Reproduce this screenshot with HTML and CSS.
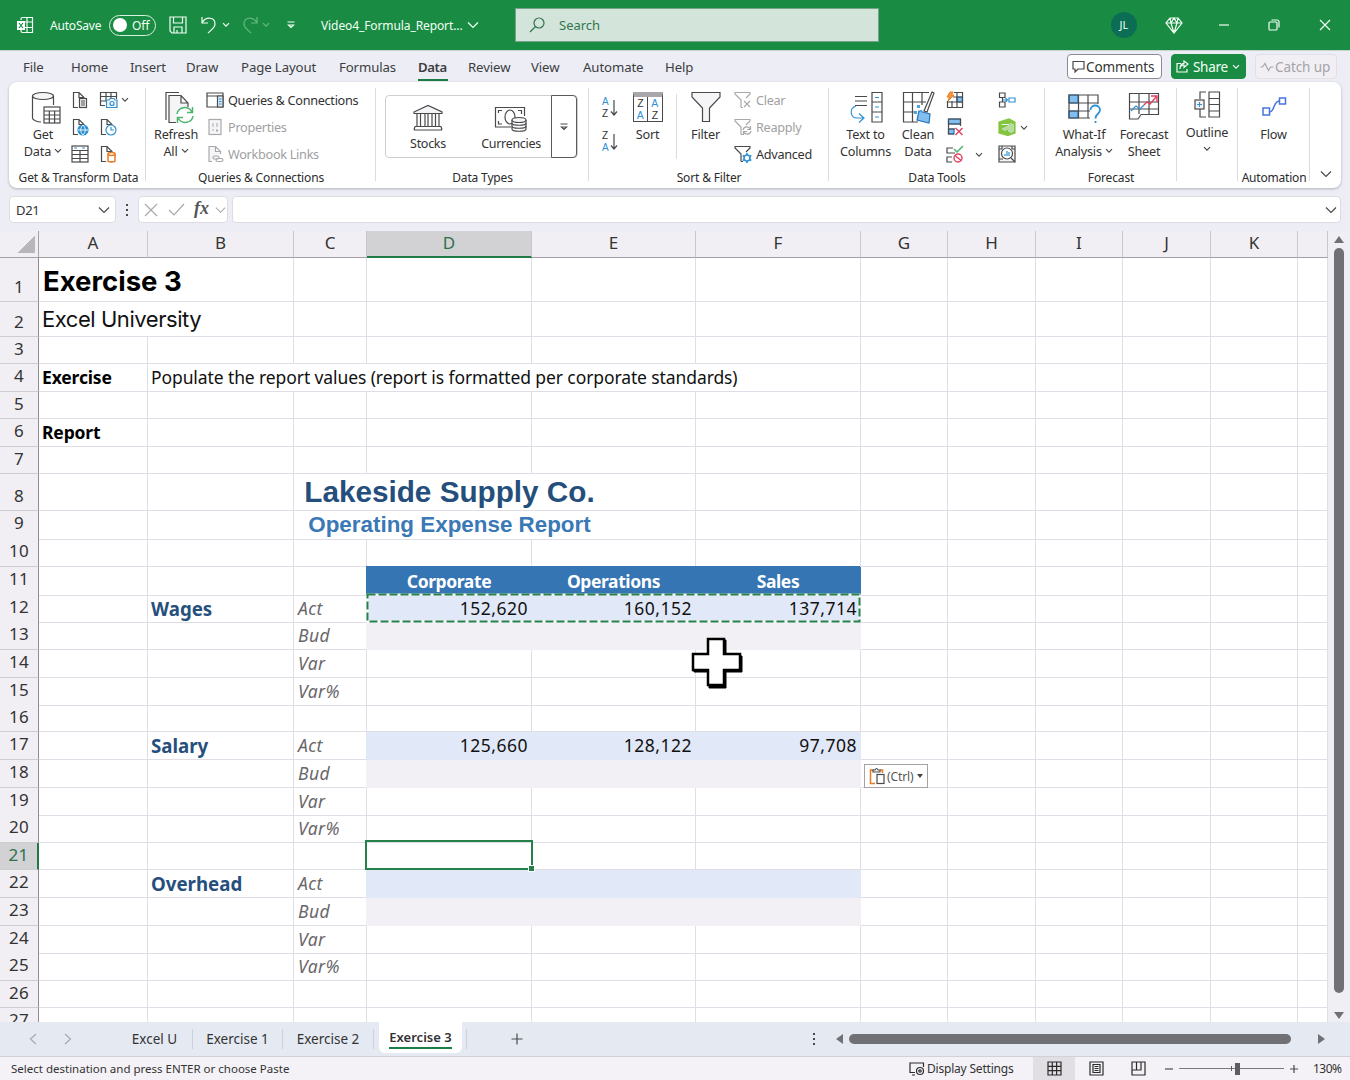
FILE: index.html
```html
<!DOCTYPE html>
<html lang="en">
<head>
    <meta charset="UTF-8">
    <meta name="viewport" content="width=device-width, initial-scale=1.0">
    <title>Video4_Formula_Report - Excel</title>
    <link rel="stylesheet" href="styles.css">
</head>
<body>

    <!-- Shared symbols -->
    <svg class="defs">
        <symbol id="chev" viewBox="0 0 8 6"><path d="M1 1.2 L4 4.2 L7 1.2"/></symbol>
        <symbol id="page" viewBox="0 0 18 18"><path d="M7 16.5H2.5V1.5H8L13 6.5V8M8 1.5V6.5H13"/></symbol>
        <symbol id="funnel" viewBox="0 0 18 18"><path d="M7 16.5V9L1 3V1.5H16V3L12 7M7 16.5H9"/></symbol>
    </svg>

    <div class="titlebar">
        <svg class="i white app-icon" width="18" height="18" viewBox="0 0 18 18"><path d="M5 4V3Q5 1.5 6.5 1.5H16.5V16.5H6.5Q5 16.5 5 15V14M11 1.5V16.5M9 6H16.5M9 11.5H16.5"/><rect class="solid" x="1" y="5" width="8" height="9"/><path class="on-white" d="M3 7L7 12M7 7L3 12"/></svg>
        <span class="autosave">AutoSave</span>
        <span class="toggle"><i></i><b>Off</b></span>
        <svg class="i white save" width="18" height="18" viewBox="0 0 18 18"><path d="M1 1H17V17H3L1 15ZM4.500 1V7H13.500V1M5 17V11H13V17M8 17V14"/></svg>
        <svg class="i white undo" width="18" height="20" viewBox="0 0 18 20"><path d="M2 2V8H8M2 8C6 1 15 2 15 9C15 13 11 15 8 18"/></svg>
        <svg class="i white undo-more" width="8" height="6"><use href="#chev"/></svg>
        <svg class="i faded redo" width="18" height="20" viewBox="0 0 18 20"><path d="M16 2V8H10M16 8C12 1 3 2 3 9C3 13 7 15 10 18"/></svg>
        <svg class="i faded" width="8" height="6"><use href="#chev"/></svg>
        <svg class="i white customize" width="8" height="8" viewBox="0 0 8 8"><path d="M0.500 1H7.500M1.500 4L4 6.500L6.500 4Z"/></svg>
        <span class="doc-name">Video4_Formula_Report...</span>
        <svg class="i white doc-chev" width="12" height="8" viewBox="0 0 12 8"><path d="M1 1.500L6 6.500L11 1.500"/></svg>
        <div class="search">
            <svg class="i search-icon" width="16" height="16" viewBox="0 0 16 16"><circle cx="10" cy="6" r="5"/><path d="M6.500 9.500L1 15"/></svg>
            <span>Search</span>
        </div>
        <span class="avatar">JL</span>
        <svg class="i white gem" width="18" height="17" viewBox="0 0 18 17"><path d="M5 1H13L17 6L9 16L1 6ZM1 6H17M5 1L6 6L9 16L12 6L13 1M6 6L9 1L12 6"/></svg>
        <svg class="i white win-min" width="12" height="12" viewBox="0 0 12 12"><path d="M1 6H11"/></svg>
        <svg class="i white win-max" width="12" height="12" viewBox="0 0 12 12"><rect x="1" y="3" width="8" height="8" rx="1"/><path d="M3.500 1H9Q11 1 11 3V8.500"/></svg>
        <svg class="i white win-close" width="12" height="12" viewBox="0 0 12 12"><path d="M1 1L11 11M11 1L1 11"/></svg>
    </div>

    <div class="menu">
        <span class="m-file">File</span>
        <span class="m-home">Home</span>
        <span class="m-insert">Insert</span>
        <span class="m-draw">Draw</span>
        <span class="m-layout">Page Layout</span>
        <span class="m-formulas">Formulas</span>
        <span class="m-data active">Data</span>
        <span class="m-review">Review</span>
        <span class="m-view">View</span>
        <span class="m-automate">Automate</span>
        <span class="m-help">Help</span>
        <div class="actions">
            <button class="comments"><svg class="i" width="13" height="13" viewBox="0 0 13 13"><path d="M1 1.500H12V9H6L3 12V9H1Z"/></svg>Comments</button>
            <button class="share"><svg class="i white" width="13" height="13" viewBox="0 0 13 13"><path d="M5 3.500H1V12H11V9M4 9C4 6 6 5 8 5V7.500L12 4L8 1V3.300C5 3.500 4 6 4 9Z"/></svg>Share<svg class="i white" width="8" height="6"><use href="#chev"/></svg></button>
            <button class="catchup"><svg class="i gray" width="14" height="12" viewBox="0 0 14 12"><path d="M0.500 6H2.500L5 2.500L8.500 9.500L10.500 6H13.500"/></svg>Catch up</button>
        </div>
    </div>

    <div class="ribbon">
        <div class="group g-get">
            <div class="body">
                <div class="big">
                    <svg class="i" width="32" height="34" viewBox="0 0 32 34"><ellipse class="pale" cx="14" cy="5" rx="10.500" ry="3.500"/><path d="M3.500 5V27C3.500 29 8 31 12 31M24.500 5V14"/><rect class="white-fill" x="15" y="16" width="16" height="16"/><path d="M15 20H31M15 24H31M15 28H31M20.300 20V32M25.600 20V32"/></svg>
                    <span>Get<br>Data <svg class="i" width="8" height="6"><use href="#chev"/></svg></span>
                </div>
                <div class="smalls first">
                    <svg class="i" width="18" height="18" viewBox="0 0 18 18"><use href="#page"/><rect class="pale" x="8.500" y="7.500" width="7" height="9"/><path d="M10 10H14M10 12H14M10 14H14"/></svg>
                    <svg class="i" width="18" height="18" viewBox="0 0 18 18"><use href="#page"/><circle class="blue-fill" cx="12" cy="12" r="5"/><path class="pale-line" d="M7 12H17M12 7C9 10 9 14 12 17C15 14 15 10 12 7"/></svg>
                    <svg class="i" width="18" height="18" viewBox="0 0 18 18"><rect x="1" y="1" width="16" height="16"/><path d="M1 5.500H17M1 9.500H17M1 13.500H17M9 5.500V17"/><path class="blue" d="M3 3H6M11 3H14"/></svg>
                </div>
                <div class="smalls second">
                    <svg class="i" width="20" height="18" viewBox="0 0 20 18"><path d="M6 14.500H1.500V1.500H17.500V8M1.500 5.500H17.500M1.500 10H7M7 1.500V10M12 1.500V7"/><path class="blue pale" d="M7.500 9H10L11 7.500H15L16 9H18V16.500H7.500Z"/><circle class="blue" cx="13" cy="12.500" r="2"/></svg>
                    <svg class="i" width="18" height="18" viewBox="0 0 18 18"><use href="#page"/><circle class="blue white-fill" cx="12" cy="12" r="5"/><path class="blue" d="M12 9V12H15"/></svg>
                    <svg class="i" width="18" height="18" viewBox="0 0 18 18"><use href="#page"/><path class="orange white-fill" d="M9 9V16C9 17.300 16 17.300 16 16V9"/><ellipse class="orange white-fill" cx="12.500" cy="9" rx="3.500" ry="1.500"/></svg>
                </div>
                <svg class="i more" width="8" height="6"><use href="#chev"/></svg>
            </div>
            <div class="label">Get &amp; Transform Data</div>
        </div>

        <div class="group g-queries">
            <div class="body">
                <div class="big">
                    <svg class="i" width="32" height="34" viewBox="0 0 32 34"><path d="M4 29V1.500H17"/><path class="pale" d="M14 31.500H7V4.500H19L26 12V16M19 4.500V12H26"/><path class="white-fill noline" d="M15 17H32V34H15Z"/><path class="green" d="M15 23C16 16 26 14 30 21M30.500 16V21.500H25M31 25C30 32 20 34 16 27M15.500 32V26.500H21"/></svg>
                    <span>Refresh<br>All <svg class="i" width="8" height="6"><use href="#chev"/></svg></span>
                </div>
                <div class="list">
                    <div><svg class="i" width="18" height="18" viewBox="0 0 18 18"><path d="M1 2H17V16H1ZM1 5H17" /><path class="blue-lite-fill" d="M11.500 5H17V16H11.500Z"/><path class="blue" d="M13 8H15.500M13 10.500H15.500M13 13H15.500"/></svg><span class="qc">Queries &amp; Connections</span></div>
                    <div class="off"><svg class="i gray" width="18" height="18" viewBox="0 0 18 18"><rect class="pale" x="3" y="1.500" width="12" height="15"/><path d="M6 6H8M6 8H8M6 12H8M10 6H12M10 8H12M10 12H12M10 13H12"/></svg><span class="props">Properties</span></div>
                    <div class="off"><svg class="i gray" width="18" height="18" viewBox="0 0 18 18"><path class="pale" d="M6 16.500H3V1.500H9.500L14.500 6.500V9M9.500 1.500V6.500H14.500"/><rect x="7" y="11" width="6" height="3" rx="1.500"/><rect x="10" y="13.500" width="7" height="3" rx="1.500"/></svg><span class="links">Workbook Links</span></div>
                </div>
            </div>
            <div class="label">Queries &amp; Connections</div>
        </div>

        <div class="group g-types">
            <div class="body">
                <div class="gallery">
                    <div class="type stocks">
                        <svg class="i" width="32" height="28" viewBox="0 0 32 28"><path class="pale" d="M2 8L16 1.500L30 8V9.500H2Z"/><path d="M5 9.500V22M8.500 9.500V22M13 9.500V22M16 9.500V22M20 9.500V22M23.500 9.500V22M27 9.500V22M3 22.500H29M2 26H30M3 22.500L2 26M29 22.500L30 26"/></svg>
                        <span>Stocks</span>
                    </div>
                    <div class="type">
                        <svg class="i" width="34" height="28" viewBox="0 0 34 28"><path d="M17 23H1.500V3.500H30.500V12M4.500 9V6.500H8M4.500 17V20H8M24 6.500H27.500V10"/><ellipse cx="16" cy="13" rx="5" ry="7"/><path class="white-fill" d="M18 16V25C18 28 32 28 32 25V16"/><ellipse class="pale" cx="25" cy="16" rx="7" ry="2.500"/><path d="M18 19C18 22 32 22 32 19M18 22C18 25 32 25 32 22"/></svg>
                        <span>Currencies</span>
                    </div>
                    <div class="gallery-more"><svg class="i" width="8" height="8" viewBox="0 0 8 8"><path d="M0.500 1H7.500M1.500 4L4 6.500L6.500 4Z"/></svg></div>
                </div>
            </div>
            <div class="label">Data Types</div>
        </div>

        <div class="group g-sort">
            <div class="body">
                <div class="az-col">
                    <div class="az"><span><b>A</b><br>Z</span><svg class="i" width="8" height="20" viewBox="0 0 8 20"><path d="M4 2V17M1 13.500L4 17L7 13.500"/></svg></div>
                    <div class="az"><span>Z<br><b>A</b></span><svg class="i" width="8" height="20" viewBox="0 0 8 20"><path d="M4 2V17M1 13.500L4 17L7 13.500"/></svg></div>
                </div>
                <div class="big sort">
                    <div class="sort-icon"><span>Z<br><b>A</b></span><span><b>A</b><br>Z</span></div>
                    <span>Sort</span>
                </div>
                <div class="big filter">
                    <svg class="i" width="32" height="34" viewBox="0 0 32 34"><path class="pale" d="M2 1.500H30V6L19.500 17V30.500H12.500V17L2 6Z"/></svg>
                    <span>Filter</span>
                </div>
                <div class="list">
                    <div class="off"><svg class="i gray" width="18" height="18" viewBox="0 0 18 18"><use href="#funnel"/><path d="M10 10L16 16M16 10L10 16"/></svg><span>Clear</span></div>
                    <div class="off"><svg class="i gray" width="18" height="18" viewBox="0 0 18 18"><use href="#funnel"/><path d="M9 12C10 8 15 8 16 11M16.500 8V11.500H13M17 13C16 17 11 17 10 14M9.500 17V13.500H13"/></svg><span>Reapply</span></div>
                    <div><svg class="i" width="18" height="18" viewBox="0 0 18 18"><use href="#funnel"/><circle class="blue thick" cx="13" cy="13" r="3"/><path class="blue thick" d="M13 8V10M13 16V18M8.700 10.500L10.500 11.500M15.500 14.500L17.300 15.500M8.700 15.500L10.500 14.500M15.500 11.500L17.300 10.500"/></svg><span>Advanced</span></div>
                </div>
            </div>
            <div class="label">Sort &amp; Filter</div>
        </div>

        <div class="group g-tools">
            <div class="body">
                <div class="big t2c">
                    <svg class="i" width="34" height="34" viewBox="0 0 34 34"><path d="M6 5.500H18M6 10H18M6 14.500H18M23 1.500H33V31H23ZM23 11H33M23 21H33"/><path class="blue" d="M26 6.500H30M26 16H30M26 26H30M7 15C0 17 1 27 8 27H14M10 22.500L15 27L10 31.500"/></svg>
                    <span>Text to<br>Columns</span>
                </div>
                <div class="big clean">
                    <svg class="i" width="34" height="34" viewBox="0 0 34 34"><path d="M17 31H2.500V1.500H28M2.500 11H25M2.500 21H16M11.500 1.500V31M21 1.500V14"/><path class="white-fill" d="M31 1L33 2L26 21L23 20Z"/><path class="blue-mid" d="M18 20L29 23L28 32L16 29Z"/><path class="blue-dots" d="M13 20h3v3h-3zM16 14h3v3h-3zM19 19h2v2h-2z"/></svg>
                    <span>Clean<br>Data</span>
                </div>
                <div class="smalls">
                    <svg class="i" width="18" height="18" viewBox="0 0 18 18"><path class="blue-mid" d="M11 6H16.500V11H11Z"/><path d="M8 1.500H16.500V16.500H1.500V10M1.500 11H16.500M7 6H16.500M6 10V16.500M11 2V16.500"/><path class="orange orange-fill" d="M4 1H7L5.500 4H8L2 10L3.500 6H1Z"/></svg>
                    <svg class="i" width="18" height="18" viewBox="0 0 18 18"><path class="blue-mid" d="M2.500 1H14.500V6H2.500ZM2.500 11H8V16H2.500Z"/><path d="M2.500 1H14.500V8M2.500 1V16H8M2.500 6H14.500M2.500 11H9"/><path class="red" d="M9.500 10L16.500 17M16.500 10L9.500 17"/></svg>
                    <svg class="i" width="18" height="18" viewBox="0 0 18 18"><path d="M7 3H1V8H9M6 12H1V17H6"/><path class="green" d="M8 4L11 7L17 1"/><circle class="red" cx="12" cy="13" r="4"/><path class="red" d="M9 10.500L15 15.500"/></svg>
                </div>
                <svg class="i more low" width="8" height="6"><use href="#chev"/></svg>
                <div class="smalls third">
                    <svg class="i" width="18" height="18" viewBox="0 0 18 18"><path d="M1.500 2H7V6.500H1.500ZM1.500 11H7V16H1.500ZM4.500 6.500V11"/><path class="blue" d="M11 7H17V11H11ZM5 9H9M7.500 7L9.500 9L7.500 11"/></svg>
                    <svg class="i" width="18" height="18" viewBox="0 0 18 18"><path class="lime" d="M1 4L11 1L17 4V15L10 17.500L1 15Z"/><path class="pale-line" d="M3.500 6.500H11V14M13 5V15M15 6V14"/><path class="pale-line" d="M5 12V10M7 13V9M9 12V8"/></svg>
                    <svg class="i" width="18" height="18" viewBox="0 0 18 18"><path class="pale" d="M1 1H17V17H1Z"/><path d="M1 4H4M14 4H17M1 14H5M4 1V4M14 1V4M13 13L17 17"/><circle class="white-fill" cx="9" cy="8.500" r="5.500"/><path class="blue" d="M7 11V9M9 11V6M11 11V7"/></svg>
                </div>
                <svg class="i more mid" width="8" height="6"><use href="#chev"/></svg>
            </div>
            <div class="label">Data Tools</div>
        </div>

        <div class="group g-forecast">
            <div class="body">
                <div class="big whatif">
                    <svg class="i" width="34" height="34" viewBox="0 0 34 34"><path class="blue-mid" d="M2 4H11V12H2ZM2 20H11V27H2Z"/><path d="M23 27H2V4H31V13M2 12H31M2 20H23M11.500 4V27M21 4V27"/><path class="white-fill noline" d="M23 14H34V33H23Z"/><path class="blue big-q" d="M23.500 19C23.500 13 33 13 33 19C33 23 28.500 22.500 28.500 27.500M28.500 30V32"/></svg>
                    <span>What-If<br>Analysis <svg class="i" width="8" height="6"><use href="#chev"/></svg></span>
                </div>
                <div class="big fsheet">
                    <svg class="i" width="34" height="34" viewBox="0 0 34 34"><path d="M14 23.500H31.500V2.500H2.500V28H11L14 23.500M2.500 11H31.500M2.500 18H31.500M12 2.500V23M22 2.500V23"/><path class="blue" d="M4 20L9 15L13 18L17 14"/><path class="red" d="M17 14L20 11L23 13L30 5M24 5H30V11"/></svg>
                    <span>Forecast<br>Sheet</span>
                </div>
            </div>
            <div class="label">Forecast</div>
        </div>

        <div class="group g-outline">
            <div class="body">
                <div class="big">
                    <svg class="i" width="28" height="32" viewBox="0 0 28 32"><path d="M16 1H26.500V26H16ZM16 7.500H26.500M16 13.500H26.500M16 20H26.500M13 1H7V8M13 26H7V18"/><rect class="pale" x="2" y="9" width="9" height="9"/><path class="blue" d="M4 13.500H9M6.500 11V16"/></svg>
                    <span>Outline<br><svg class="i" width="8" height="6"><use href="#chev"/></svg></span>
                </div>
            </div>
        </div>

        <div class="group g-flow">
            <div class="body">
                <div class="big">
                    <svg class="i flow-icon" width="26" height="34" viewBox="0 0 26 34"><path d="M2 17H8.500V24H2ZM18.500 7H24.500V13H18.500ZM8.500 21C14 21 12 10 18.500 10"/></svg>
                    <span>Flow</span>
                </div>
            </div>
            <div class="label">Automation</div>
        </div>
        <div class="collapse"><svg class="i" width="12" height="8" viewBox="0 0 12 8"><path d="M1 1.500L6 6.500L11 1.500"/></svg></div>
    </div>

    <div class="formula-bar">
        <div class="name-box">D21<svg class="i" width="12" height="8" viewBox="0 0 12 8"><path d="M1 1.500L6 6.500L11 1.500"/></svg></div>
        <div class="dots"><i></i><i></i><i></i></div>
        <div class="fx-box">
            <svg class="i gray" width="14" height="14" viewBox="0 0 14 14"><path d="M1 1L13 13M13 1L1 13"/></svg>
            <svg class="i gray check" width="17" height="13" viewBox="0 0 17 13"><path d="M1 7L6 12L16 1"/></svg>
            <em>fx</em>
            <svg class="i gray" width="11" height="8" viewBox="0 0 12 8"><path d="M1 1.500L6 6.500L11 1.500"/></svg>
        </div>
        <div class="formula"><svg class="i" width="12" height="8" viewBox="0 0 12 8"><path d="M1 1.500L6 6.500L11 1.500"/></svg></div>
    </div>

    <div class="workspace">
        <div class="sheet" id="sheet">
            <div class="row head" id="head"><div class="corner"></div></div>
        </div>
        <svg class="ants" width="496" height="30" viewBox="0 0 496 30"><rect class="under" x="1.500" y="1.500" width="492" height="27"/><rect class="dash" x="1.500" y="1.500" width="492" height="27"/></svg>
        <div class="selection"><i></i></div>
        <div class="paste">
            <svg class="i" width="16" height="18" viewBox="0 0 16 18"><path class="orange" d="M5 3H1.500V16.500H6M11 3H13.500V6"/><path class="white-fill" d="M4 5V3H6Q7.500 0 9 3H11V5Z"/><rect class="white-fill" x="8" y="7.500" width="7" height="9"/></svg>
            <span>(Ctrl)</span><b></b>
        </div>
        <svg class="cursor" width="54" height="54" viewBox="0 0 54 54"><path class="shade" d="M19 4H36V20H52V36H36V52H19V36H4V20H19Z"/><path class="face" d="M18 3H34V18H50V34H34V49H18V34H3V18H18Z"/></svg>
        <div class="vscroll"><i class="up"></i><div class="thumb"></div><i class="down"></i></div>
    </div>

    <div class="sheet-tabs">
        <svg class="i gray nav-prev" width="8" height="12" viewBox="0 0 8 12"><path d="M7 1L1.500 6L7 11"/></svg>
        <svg class="i gray nav-next" width="8" height="12" viewBox="0 0 8 12"><path d="M1 1L6.500 6L1 11"/></svg>
        <span class="tab t-u">Excel U</span>
        <span class="tab t-1">Exercise 1</span>
        <span class="tab t-2">Exercise 2</span>
        <span class="tab current"><b>Exercise 3</b></span>
        <span class="tab end"></span>
        <svg class="i plus" width="12" height="12" viewBox="0 0 12 12"><path d="M6 0.500V11.500M0.500 6H11.500"/></svg>
        <div class="dots"><i></i><i></i><i></i></div>
        <div class="hscroll"><i class="left"></i><div class="thumb"></div><i class="right"></i></div>
    </div>

    <div class="status">
        <span class="message">Select destination and press ENTER or choose Paste</span>
        <svg class="i dark" width="16" height="14" viewBox="0 0 16 14"><path d="M6 10.500H1V1H14.500V5M3 13H6"/><circle cx="11" cy="9" r="3.500"/><circle cx="11" cy="9" r="1.200"/></svg>
        <span class="display">Display Settings</span>
        <span class="view on"><svg class="i dark" width="15" height="15" viewBox="0 0 15 15"><path d="M1 1H14V14H1ZM1 5.300H14M1 9.600H14M5.300 1V14M9.600 1V14"/></svg></span>
        <span class="view"><svg class="i dark" width="15" height="15" viewBox="0 0 15 15"><path d="M1 1H14V14H1ZM4 3.500H11V11.500H4ZM5.500 5.500H9.500M5.500 7.500H9.500M5.500 9.500H9.500"/></svg></span>
        <span class="view"><svg class="i dark" width="15" height="15" viewBox="0 0 15 15"><path d="M1 1H14V14H1ZM1 9H10V1M5.500 1V9"/></svg></span>
        <svg class="i zoom-out" width="10" height="10" viewBox="0 0 10 10"><path d="M1 5H9"/></svg>
        <div class="slider"><b></b><i></i></div>
        <svg class="i zoom-in" width="10" height="10" viewBox="0 0 10 10"><path d="M1 5H9M5 1V9"/></svg>
        <span class="percent">130%</span>
    </div>

    <script>
        const columns = "ABCDEFGHIJK".split("").concat("");
        const heights = [44, 35, 27, 28, 27, 28, 27, 37, 28, 28, 28, 27, 28, 28, 27, 27, 28, 28, 27, 28, 27, 28, 28, 27, 28, 27, 28];

        // row -> column -> [text, class, columns covered]
        const cells = {
            1: { A: ["Exercise 3", "title", 2] },
            2: { A: ["Excel University", "subtitle", 2] },
            4: { A: ["Exercise", "bold"], B: ["Populate the report values (report is formatted per corporate standards)", "long", 5] },
            6: { A: ["Report", "bold"] },
            8: { C: ["Lakeside Supply Co.", "company", 3] },
            9: { C: ["Operating Expense Report", "report", 3] },
            11: { D: ["Corporate", "th"], E: ["Operations", "th"], F: ["Sales", "th"] },
            12: { B: ["Wages", "cat"], D: ["152,620", "num act"], E: ["160,152", "num act"], F: ["137,714", "num act"] },
            17: { B: ["Salary", "cat"], D: ["125,660", "num act"], E: ["128,122", "num act"], F: ["97,708", "num act"] },
            22: { B: ["Overhead", "cat"], D: ["", "act"], E: ["", "act"], F: ["", "act"] }
        };

        // each category has the same four lines
        [12, 17, 22].forEach(function(start) {
            ["Act", "Bud", "Var", "Var%"].forEach(function(name, i) {
                cells[start + i] = cells[start + i] || {};
                cells[start + i].C = [name, "kind"];
            });
            ["D", "E", "F"].forEach(function(col) {
                cells[start + 1][col] = ["", "bud"];
            });
        });

        function addCell(row, text, cls, span) {
            const div = document.createElement("div");
            div.className = cls;
            div.innerHTML = `<span>${text}</span>`;
            if (span > 1) {
                div.style.gridColumn = "span " + span;
            }
            row.appendChild(div);
        }

        const head = document.getElementById("head");
        columns.forEach(function(col) {
            addCell(head, col, col === "D" ? "col-name selected" : "col-name", 1);
        });

        heights.forEach(function(height, index) {
            const number = index + 1;
            const row = document.createElement("div");
            row.className = "row";
            row.style.height = height + "px";
            let name = "row-name";
            if (number === 21) name += " selected";
            if (height > 30) name += " tall";
            addCell(row, number, name, 1);
            for (let c = 0; c < columns.length; c++) {
                const cell = (cells[number] || {})[columns[c]] || ["", ""];
                addCell(row, cell[0], "cell " + cell[1], cell[2] || 1);
                c += (cell[2] || 1) - 1;
            }
            document.getElementById("sheet").appendChild(row);
        });
    </script>

</body>
</html>
```
FILE: styles.css
```css
* {
    box-sizing: border-box;
}
body {
    margin: 0;
    width: 1350px;
    height: 1080px;
    overflow: hidden;
    display: flex;
    flex-direction: column;
    background-color: #ecedf5;
    font-family: "Noto Sans", "Open Sans", sans-serif;
    font-size: 13px;
    color: #333;
}
svg {
    display: block;
    flex: none;
}
.defs {
    position: absolute;
    width: 0;
    height: 0;
}

/* icon strokes and fills */
.i {
    fill: none;
    stroke: #4a4a4c;
    stroke-width: 1.2;
}
.white { stroke: #f2fff5; }
.faded { stroke: #64b883; }
.gray { stroke: #aaa8ac; }
.dark { stroke: #2b2b2b; }
.solid { fill: #fff; stroke: none; }
.on-white { stroke: #1a8b43; }
.pale { fill: #f5f4f6; }
.white-fill { fill: #fff; }
.noline { stroke: none; }
.blue { stroke: #2f91d4; }
.blue-fill { fill: #2d8fd0; stroke: #2d8fd0; }
.blue-lite-fill { fill: #d8ebf9; }
.blue-mid { fill: #82bff0; stroke: #2874b4; }
.blue-dots { fill: #4aa3df; stroke: none; }
.pale-line { stroke: #e8f6ff; stroke-width: 1; }
.green { stroke: #4fb26f; stroke-width: 1.5; }
.orange { stroke: #e87a25; stroke-width: 1.5; }
.orange-fill { fill: #f59a35; stroke-width: 1; }
.red { stroke: #e2415f; stroke-width: 1.4; }
.lime { fill: #85c440; stroke: #85c440; }
.thick { stroke-width: 1.6; }
.big-q { stroke-width: 1.8; }

/* title bar */
.titlebar {
    height: 50px;
    display: flex;
    align-items: center;
    background-color: #1a8b43;
    color: #f2fff5;
    font-size: 12px;
}
.app-icon { margin-left: 16px; }
.autosave { margin-left: 16px; width: 59px; letter-spacing: -0.2px; }
.toggle {
    width: 47px;
    height: 21px;
    border: 1px solid #d8f0df;
    border-radius: 11px;
    display: flex;
    align-items: center;
    padding-left: 3px;
}
.toggle i {
    width: 14px;
    height: 14px;
    border-radius: 50%;
    background-color: #fff;
    margin-right: 5px;
}
.toggle b { font-weight: normal; }
.save { margin-left: 13px; }
.undo { margin-left: 13px; }
.undo-more { margin-left: 4px; }
.redo { margin: 0 3px 0 11px; }
.customize { margin-left: 17px; }
.doc-name { margin-left: 26px; width: 147px; white-space: nowrap; letter-spacing: -0.1px; padding-top: 1px; }
.search {
    margin-left: 36px;
    width: 364px;
    height: 34px;
    border: 1px solid #76a287;
    background-color: #d3e5da;
    color: #32754d;
    font-size: 13px;
    display: flex;
    align-items: center;
    padding-left: 13px;
}
.search svg { stroke: #32754d; margin-right: 14px; }
.doc-chev { margin-left: -1px; }
.avatar {
    margin-left: 232px;
    width: 26px;
    height: 26px;
    border-radius: 50%;
    background-color: #0b6e54;
    font-size: 11px;
    line-height: 26px;
    text-align: center;
}
.gem { margin-left: 28px; }
.win-min { margin-left: 35px; }
.win-max { margin-left: 38px; }
.win-close { margin-left: 39px; }

/* menu */
.menu {
    height: 32px;
    padding-left: 23px;
    display: flex;
    align-items: center;
    font-size: 13.2px;
    letter-spacing: -0.1px;
    color: #3d3d40;
    border-top: 1px solid #c5d4cc;
}
.menu > span { line-height: 24px; white-space: nowrap; }
.m-file { width: 48px; }
.m-home { width: 59px; }
.m-insert { width: 56px; }
.m-draw { width: 55px; }
.m-layout { width: 98px; }
.m-formulas { width: 79px; }
.m-review { width: 63px; margin-left: 20px; }
.m-view { width: 52px; }
.m-automate { width: 82px; }
.m-help { width: 30px; }
.active {
    width: 30px;
    border-bottom: 2px solid #1b7c46;
    font-weight: 600;
    height: 26px;
    margin-top: 2px;
    letter-spacing: -0.4px;
}
.actions { margin-left: 372px; display: flex; }
.actions button {
    height: 25px;
    display: flex;
    align-items: center;
    gap: 1px;
    padding: 0 4px;
    border: 1px solid #8b8b90;
    border-radius: 4px;
    background-color: #fff;
    font: 13.5px "Noto Sans", sans-serif;
    letter-spacing: -0.1px;
    color: #333;
    white-space: nowrap;
}
.actions .comments { width: 95px; }
.actions .share { width: 75px; margin-left: 9px; background-color: #1a8b43; border-color: #1a8b43; color: #f2fff5; gap: 4px; letter-spacing: -0.3px; }
.actions .catchup { width: 82px; margin-left: 9px; background-color: #f1eff4; border-color: #e2e0e6; color: #a5a3a8; }

/* ribbon */
.ribbon {
    margin: 0 9px;
    height: 106px;
    flex: none;
    display: flex;
    background-color: #fff;
    border-radius: 8px;
    box-shadow: 0 1px 3px rgba(0, 0, 0, 0.25);
}
.group {
    height: 106px;
    display: flex;
    flex-direction: column;
    background: linear-gradient(#dcdbdf, #dcdbdf) right 6px / 1px 93px no-repeat;
}
.group .body { height: 86px; display: flex; }
.label {
    font-size: 12px;
    line-height: 19px;
    text-align: center;
    color: #2b2b2b;
    white-space: nowrap;
    letter-spacing: -0.15px;
}
.g-get { width: 137px; }
.g-get .label { width: 139px; }
.g-queries { width: 230px; }
.g-types { width: 213px; }
.g-sort { width: 240px; }
.g-tools { width: 216px; }
.g-forecast { width: 132px; }
.g-outline { width: 61px; }
.g-flow { width: 72px; }
.big {
    width: 66px;
    padding-top: 9px;
    display: flex;
    flex-direction: column;
    align-items: center;
    text-align: center;
    font-size: 12.7px;
    line-height: 17px;
    white-space: nowrap;
    letter-spacing: -0.2px;
}
.big > svg { height: 34px; }
.big > span { margin-top: 1px; }
.big span svg { display: inline-block; vertical-align: 2px; }
.g-get .big { width: 68px; }
.g-get .big > svg { margin-left: 4px; }
.smalls { padding-top: 4px; width: 18px; display: flex; flex-direction: column; }
.smalls svg { margin: 4.500px 0; }
.smalls.first { margin-left: -6px; }
.smalls.second { margin-left: 10px; }
.more { margin: 15px 0 0 4px; }
.list { padding-top: 4px; white-space: nowrap; font-size: 12.7px; letter-spacing: -0.3px; }
.list div { height: 27px; display: flex; align-items: center; }
.list svg { margin-right: 4px; }
.off { color: #a19fa3; }

.g-queries .big { width: 60px; }
.g-queries .big > svg { margin-left: 4px; }
.gallery {
    margin: 13px 0 0 9px;
    width: 193px;
    height: 63px;
    border: 1px solid #d0ced2;
    border-radius: 4px;
    display: flex;
}
.type {
    width: 82px;
    display: flex;
    flex-direction: column;
    align-items: center;
    padding-top: 8px;
    font-size: 12.5px;
    line-height: 18px;
    letter-spacing: -0.3px;
}
.type svg { margin-bottom: 3px; }
.type.stocks { width: 84px; }
.gallery-more {
    width: 26px;
    margin: -1px;
    border: 1px solid #5b5b5e;
    border-radius: 0 4px 4px 0;
    display: flex;
    align-items: center;
    justify-content: center;
}
.az-col { width: 29px; padding: 14px 0 0 13px; }
.az { height: 34px; display: flex; font: 10px/12px "Liberation Sans", Arial, sans-serif; }
.az span { width: 9px; }
.az b, .sort-icon b { color: #2f91d4; font-weight: normal; }
.az svg { margin-top: 2px; }
.big.sort { width: 59px; background: linear-gradient(#dcdbdf, #dcdbdf) right 12px / 1px 65px no-repeat; }
.sort-icon {
    width: 30px;
    height: 30px;
    margin: 1px 0 3px;
    border: 1px solid #4a4a4c;
    border-top: 5px solid #a9a7ab;
    display: flex;
    font: 10.5px/12px "Liberation Sans", Arial, sans-serif;
}
.sort-icon span { flex: 1; }
.sort-icon span + span { border-left: 1px solid #4a4a4c; }
.big.filter { width: 57px; }
.big.t2c { width: 73px; }
.big.clean { width: 32px; }
.g-tools .smalls { margin-left: 12px; }
.g-tools .more.low { margin: 70px 0 0 11px; }
.g-tools .smalls.third { margin-left: 15px; }
.g-tools .more.mid { margin: 43px 0 0 4px; }
.big.whatif { width: 78px; }
.big.fsheet { width: 42px; }
.g-outline .big { width: 60px; }
.g-outline .big > svg { height: 32px; }
.g-flow .big { width: 71px; }
.flow-icon { stroke: #4674df; stroke-width: 1.5; }
.g-flow .label { letter-spacing: -0.2px; }
.collapse { padding: 88px 0 0 10px; }

/* formula bar */
.formula-bar {
    height: 43px;
    flex: none;
    padding: 8px 9px 0 9px;
    display: flex;
}
.name-box, .fx-box, .formula {
    height: 27px;
    background-color: #fff;
    border: 1px solid #dddce2;
    border-radius: 4px;
    display: flex;
    align-items: center;
}
.name-box { width: 107px; justify-content: space-between; padding: 0 5px 0 6px; letter-spacing: -0.3px; }
.dots { width: 22px; display: flex; flex-direction: column; align-items: center; justify-content: center; gap: 3px; height: 27px; }
.dots i { width: 2px; height: 2px; background-color: #48484c; }
.fx-box { width: 90px; padding: 0 1px 0 5px; }
.fx-box .check { margin-left: 10px; }
.fx-box em { margin: 0 4px 2px 9px; width: 17px; font: italic bold 18px "Liberation Serif", serif; color: #555; }
.formula { width: 1109px; margin-left: 4px; justify-content: flex-end; padding-right: 3px; }

/* worksheet */
.workspace {
    position: relative;
    height: 791px;
    flex: none;
    display: flex;
    overflow: hidden;
    background-color: #f0eff4;
}
.sheet { width: 1328px; background-color: #fff; }
.row {
    display: grid;
    grid-template-columns: 39px 109px 146px 73px 165px 164px 165px 87px 88px 87px 88px 87px 30px;
}
.head { height: 27px; }
.corner {
    background: linear-gradient(135deg, transparent 50%, #b8b6ba 50%) 18px 5px / 17px 17px no-repeat #f1eff3;
    border-bottom: 1px solid #a3a1a6;
    border-right: 1px solid #a3a1a6;
}
.col-name, .row-name {
    background-color: #f1eff3;
    color: #333;
    font-size: 17px;
    display: flex;
    justify-content: center;
    align-items: center;
}
.col-name { border-right: 1px solid #c9c7cc; border-bottom: 1px solid #a3a1a6; line-height: 24px; align-items: flex-start; }
.row-name {
    border-right: 1px solid #8f8d92;
    border-bottom: 1px solid #cfcdd2;
    align-items: flex-start;
    line-height: 24px;
    letter-spacing: 0.2px;
}
.row-name.tall { align-items: flex-end; line-height: 29px; }
.col-name.selected { background-color: #d2d1d4; color: #2c7249; border-bottom: 2px solid #1f7a45; }
.row-name.selected { background-color: #d2d1d4; color: #2c7249; border-right: 2px solid #1f7a45; }
.cell {
    border-right: 1px solid #dfdde5;
    border-bottom: 1px solid #dfdde5;
    padding: 0 3px;
    display: flex;
    align-items: flex-end;
    font-size: 17.5px;
    line-height: 27px;
    white-space: nowrap;
    color: #111;
    min-width: 0;
}
.long { letter-spacing: -0.1px; }
.bold { font-weight: bold; color: #000; letter-spacing: -0.15px; }
.title { font: bold 27.5px/40px Inter, sans-serif; padding-left: 4px; color: #000; }
.subtitle { font: 22px/33px Inter, sans-serif; letter-spacing: -0.45px; }
.company { font: bold 29.7px/36px "Liberation Sans", Arial, sans-serif; color: #244e7c; justify-content: center; padding-right: 93px; }
.report { font: bold 22.4px/28px "Liberation Sans", Arial, sans-serif; color: #3a78b6; justify-content: center; padding-right: 93px; }
.th { background-color: #3575b3; border-color: #3575b3; color: #fff; font-weight: bold; justify-content: center; letter-spacing: -0.4px; line-height: 28px; box-shadow: -1px -1px 0 #3575b3; }
.cat { color: #264f7d; font-weight: bold; font-size: 18.7px; }
.kind { color: #69676b; font-style: italic; padding-left: 4px; letter-spacing: 0.4px; }
.num { justify-content: flex-end; padding-right: 3px; letter-spacing: 0.5px; }
.act { background-color: #e1e8f7; border-color: #e1e8f7; box-shadow: -1px 0 0 #e1e8f7; }
.bud { background-color: #f2f0f4; border-color: #f2f0f4; box-shadow: -1px 0 0 #f2f0f4; }

/* things drawn over the cells */
.ants { position: absolute; left: 366px; top: 362px; fill: none; stroke-width: 2; }
.under { stroke: #fff; }
.dash { stroke: #25804a; stroke-dasharray: 8 3; }
.selection {
    position: absolute;
    left: 365px;
    top: 609px;
    width: 168px;
    height: 30px;
    border: 2px solid #25804a;
}
.selection i {
    position: absolute;
    right: -4px;
    bottom: -4px;
    width: 7px;
    height: 7px;
    background-color: #25804a;
    border: 1px solid #fff;
}
.paste {
    position: absolute;
    left: 864px;
    top: 533px;
    width: 64px;
    height: 24px;
    border: 1px solid #a5a3a8;
    background-color: #fff;
    display: flex;
    align-items: center;
    padding-left: 4px;
    font-size: 12px;
    letter-spacing: -0.1px;
    color: #555;
}
.paste span { margin: 0 3px 0 2px; }
.paste b { border: 3px solid transparent; border-top: 4px solid #444; border-bottom: 0; }
.cursor { position: absolute; left: 690px; top: 405px; }
.shade { fill: #000; stroke: #000; }
.face { fill: #fff; stroke: #000; stroke-width: 2.5; }

/* scroll bars */
.vscroll { width: 22px; display: flex; flex-direction: column; align-items: center; padding-top: 5px; }
.vscroll .thumb { width: 10px; height: 745px; margin: 5px 0 19px; border-radius: 5px; background-color: #717074; }
.up { border: 5px solid transparent; border-top: 0; border-bottom: 7px solid #717074; }
.down { border: 5px solid transparent; border-bottom: 0; border-top: 7px solid #717074; }

/* sheet tabs */
.sheet-tabs {
    height: 34px;
    flex: none;
    display: flex;
    align-items: center;
    background-color: #e5eaf2;
    font-size: 13.5px;
    letter-spacing: 0;
}
.nav-prev { margin-left: 29px; }
.nav-next { margin-left: 27px; }
.tab { height: 20px; line-height: 20px; border-right: 1px solid #cdd2da; white-space: nowrap; text-align: center; }
.t-u { width: 76px; margin-left: 45px; }
.t-1 { width: 90px; }
.t-2 { width: 91px; }
.tab.current {
    height: 31px;
    width: 83px;
    margin: -3px 0 0 5px;
    background-color: #fff;
    border: 0;
    border-radius: 0 0 6px 6px;
    padding-top: 5px;
}
.tab.current b { display: inline-block; border-bottom: 2px solid #1b7c46; font-weight: 600; letter-spacing: 0; font-size: 13px; line-height: 19px; }
.tab.end { width: 5px; }
.plus { margin-left: 44px; }
.sheet-tabs .dots { margin-left: 280px; gap: 3px; }
.hscroll { margin-left: 11px; width: 490px; display: flex; align-items: center; }
.hscroll .thumb { width: 442px; height: 10px; margin: 0 27px 0 6px; border-radius: 5px; background-color: #717074; }
.left { border: 5px solid transparent; border-left: 0; border-right: 7px solid #717074; }
.right { border: 5px solid transparent; border-right: 0; border-left: 7px solid #717074; }

/* status bar */
.status {
    height: 24px;
    flex: none;
    display: flex;
    align-items: center;
    border-top: 1px solid #d0d2d8;
    background-color: #f4f2f6;
    font-size: 11.500px;
}
.message { margin-left: 11px; width: 898px; }
.display { margin-left: 2px; width: 106px; font-size: 12px; letter-spacing: -0.2px; }
.view { width: 42px; height: 23px; display: flex; align-items: center; justify-content: center; }
.view.on { background-color: #e1dfe3; }
.zoom-out { margin-left: 5px; }
.slider { width: 105px; height: 1px; background-color: #7b797d; margin: 0 5px; display: flex; align-items: center; }
.slider b { width: 1px; height: 5px; background-color: #5f5d61; margin-left: 52px; }
.slider i { width: 5px; height: 12px; background-color: #5f5d61; margin-left: 3px; }
.percent { margin-left: 14px; font-size: 12px; letter-spacing: -0.5px; }
```
